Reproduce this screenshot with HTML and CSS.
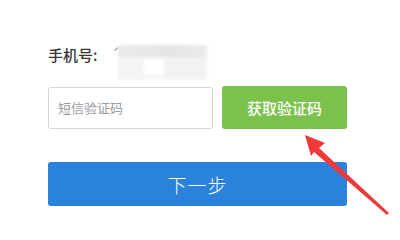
FILE: index.html
```html
<!DOCTYPE html>
<html lang="zh">
<head>
<meta charset="utf-8">
<link rel="stylesheet" href="styles.css">
</head>
<body>
<div class="page">
  <div class="phone-row">
    <span class="label">手机号:</span>
    <span class="tick">ˊ</span>
    <div class="masked"><div class="m-top"></div><div class="m-bot"><span class="p1"></span><span class="p2"></span><span class="p3"></span></div></div>
  </div>
  <div class="code-row">
    <div class="input">短信验证码</div>
    <button class="get-code">获取验证码</button>
  </div>
  <button class="next">下一步</button>
  <svg class="arrow" width="400" height="238" viewBox="0 0 400 238">
    <polygon points="305,135 325,143 319,148 389,213 387,215 314,152 311,156" fill="#f03a3a"/>
  </svg>
</div>
</body>
</html>
```
FILE: styles.css
```css
html, body { margin: 0; padding: 0; background: #fff; }
body { width: 400px; height: 238px; overflow: hidden; font-family: "Noto Sans CJK SC", "Noto Sans", sans-serif; }
.page { position: relative; width: 400px; height: 238px; padding: 0 0 0 48px; box-sizing: border-box; display: flex; flex-direction: column; }
.phone-row { display: flex; align-items: flex-start; margin-top: 45px; height: 35px; }
.label { font-size: 15px; line-height: 20px; color: #383838; font-weight: 500; width: 65px; }
.tick { font-size: 11px; color: #777; line-height: 12px; margin-top: 1px; width: 5px; }
.masked { width: 89px; height: 35px; display: flex; flex-direction: column; filter: blur(1.5px); }
.m-top { height: 12px; background: linear-gradient(90deg, #eaeaea, #e4e4e4 60%, #ececec); }
.m-bot { flex: 1; display: flex; background: #f7f7f7; }
.m-bot .p1 { width: 26px; background: #f4f4f4; }
.m-bot .p2 { width: 20px; background: #ffffff; margin: 2px 0 6px; }
.m-bot .p3 { flex: 1; background: #f2f2f2; }
.code-row { display: flex; align-items: flex-start; margin-top: 6px; }
.input { box-sizing: border-box; width: 165px; height: 42px; margin-top: 1px; border: 1px solid #d6d6d6; border-radius: 3px; padding-left: 9px; font-size: 13px; line-height: 40px; color: #9a9a9a; }
.get-code { box-sizing: border-box; margin-left: 9px; width: 125px; height: 43px; border: 0; border-radius: 3px; background: #7bc14c; color: #fff; font-family: inherit; font-size: 15px; font-weight: 500; padding: 0; }
.next { box-sizing: border-box; margin-top: 33px; width: 299px; height: 44px; border: 0; border-radius: 3px; background: #2b82dd; color: #fff; font-family: inherit; font-size: 19px; font-weight: 300; padding: 0; letter-spacing: 1px; }
.arrow { position: absolute; left: 0; top: 0; }
```
